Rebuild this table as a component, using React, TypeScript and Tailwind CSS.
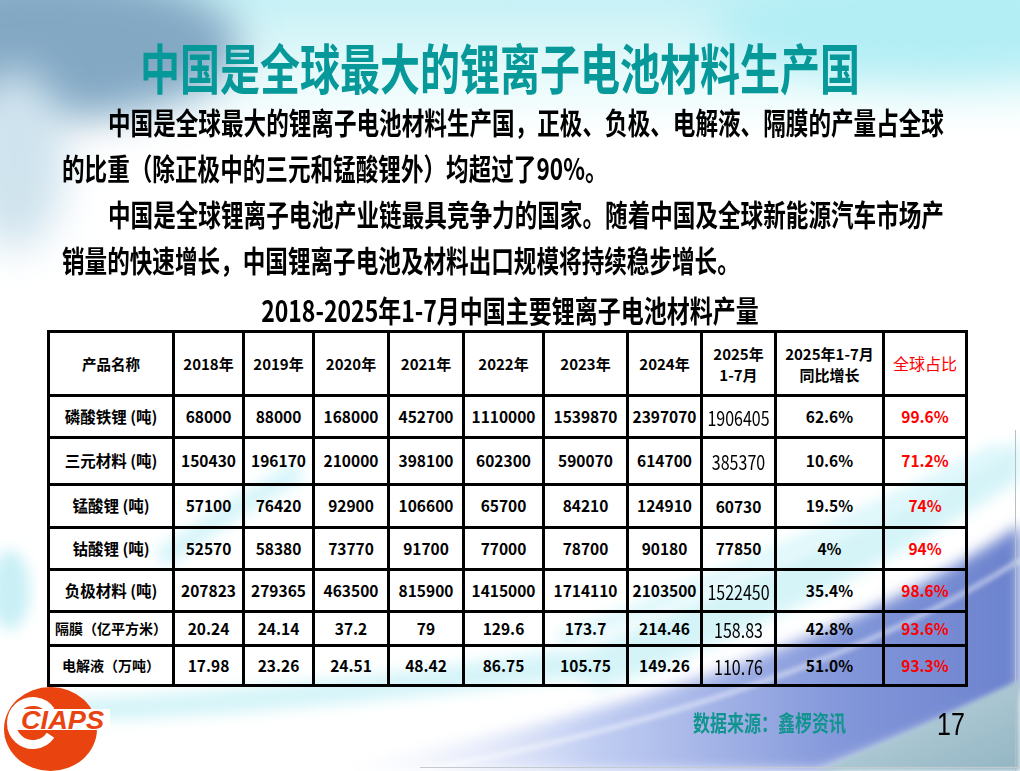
import React from "react";

const cjk = { fontFamily: '"Noto Sans CJK SC", "Noto Sans", sans-serif' };

type Row = {
  name: string;
  nameSize: string;
  vals: string[];
  ytd: string;
  ytdBold: boolean;
  yoy: string;
  share: string;
  h: string;
};

const rows: Row[] = [
  {
    name: "磷酸铁锂 (吨)",
    nameSize: "text-[15.5px]",
    vals: ["68000", "88000", "168000", "452700", "1110000", "1539870", "2397070"],
    ytd: "1906405",
    ytdBold: false,
    yoy: "62.6%",
    share: "99.6%",
    h: "h-[42px]",
  },
  {
    name: "三元材料 (吨)",
    nameSize: "text-[15.5px]",
    vals: ["150430", "196170", "210000", "398100", "602300", "590070", "614700"],
    ytd: "385370",
    ytdBold: false,
    yoy: "10.6%",
    share: "71.2%",
    h: "h-[47px]",
  },
  {
    name: "锰酸锂 (吨)",
    nameSize: "text-[15.5px]",
    vals: ["57100", "76420", "92900", "106600", "65700", "84210", "124910"],
    ytd: "60730",
    ytdBold: true,
    yoy: "19.5%",
    share: "74%",
    h: "h-[43px]",
  },
  {
    name: "钴酸锂 (吨)",
    nameSize: "text-[15.5px]",
    vals: ["52570", "58380", "73770", "91700", "77000", "78700", "90180"],
    ytd: "77850",
    ytdBold: true,
    yoy: "4%",
    share: "94%",
    h: "h-[42px]",
  },
  {
    name: "负极材料 (吨)",
    nameSize: "text-[15.5px]",
    vals: ["207823", "279365", "463500", "815900", "1415000", "1714110", "2103500"],
    ytd: "1522450",
    ytdBold: false,
    yoy: "35.4%",
    share: "98.6%",
    h: "h-[42px]",
  },
  {
    name: "隔膜（亿平方米）",
    nameSize: "text-[14px]",
    vals: ["20.24", "24.14", "37.2", "79", "129.6", "173.7", "214.46"],
    ytd: "158.83",
    ytdBold: false,
    yoy: "42.8%",
    share: "93.6%",
    h: "h-[34px]",
  },
  {
    name: "电解液（万吨）",
    nameSize: "text-[14px]",
    vals: ["17.98", "23.26", "24.51", "48.42", "86.75", "105.75", "149.26"],
    ytd: "110.76",
    ytdBold: false,
    yoy: "51.0%",
    share: "93.3%",
    h: "h-[40px]",
  },
];

const colWidths = [125, 70, 70, 75, 75, 80, 84, 74, 74, 108, 83];
const years = ["2018年", "2019年", "2020年", "2021年", "2022年", "2023年", "2024年"];

const cell = "border-[3px] border-black p-0 text-center align-middle";

function Background() {
  return (
    <svg className="absolute inset-0" width="1020" height="771" viewBox="0 0 1020 771">
      <defs>
        <linearGradient id="sky" x1="0" y1="0" x2="0" y2="1">
          <stop offset="0" stopColor="#c6f1f6" />
          <stop offset="0.55" stopColor="#e7fafb" />
          <stop offset="1" stopColor="#ffffff" />
        </linearGradient>
        <linearGradient id="band" gradientUnits="userSpaceOnUse" x1="300" y1="0" x2="1020" y2="0">
          <stop offset="0" stopColor="#ffffff" stopOpacity="0" />
          <stop offset="0.4" stopColor="#c3cff3" />
          <stop offset="0.75" stopColor="#8397da" />
          <stop offset="1" stopColor="#6b82cd" />
        </linearGradient>
        <linearGradient id="corner" x1="0" y1="0" x2="1" y2="1">
          <stop offset="0" stopColor="#c2d9e1" />
          <stop offset="1" stopColor="#93b5c3" />
        </linearGradient>
        <filter id="soft" x="-50%" y="-50%" width="200%" height="200%">
          <feGaussianBlur stdDeviation="20" />
        </filter>
        <filter id="mid" x="-20%" y="-20%" width="140%" height="140%">
          <feGaussianBlur stdDeviation="7" />
        </filter>
        <filter id="fine" x="-10%" y="-10%" width="120%" height="120%">
          <feGaussianBlur stdDeviation="2.5" />
        </filter>
      </defs>
      <rect width="1020" height="771" fill="#ffffff" />
      <rect width="1020" height="135" fill="url(#sky)" />
      <ellipse cx="40" cy="45" rx="200" ry="75" fill="#83a8c4" filter="url(#soft)" />
      <ellipse cx="15" cy="160" rx="50" ry="90" fill="#cfe3ee" filter="url(#soft)" />
      <ellipse cx="930" cy="25" rx="220" ry="55" fill="#b3eef5" filter="url(#soft)" />
      <ellipse cx="10" cy="590" rx="20" ry="40" fill="#c9f0f6" filter="url(#mid)" />
      <path
        d="M 40 700 Q 300 690 560 650 L 600 675 Q 300 715 60 722 Z"
        fill="#c8f1f6"
        opacity="0.75"
        filter="url(#mid)"
      />
      <path
        d="M 560 660 Q 800 560 1020 440 L 1020 480 Q 800 620 600 690 Z"
        fill="#c8f1f6"
        opacity="0.75"
        filter="url(#mid)"
      />
      <path
        d="M 160 560 Q 230 510 300 470"
        stroke="#d6f5f9"
        strokeWidth="20"
        fill="none"
        filter="url(#mid)"
      />
      <path
        d="M 560 640 Q 780 560 1000 450"
        stroke="#d9f6fa"
        strokeWidth="14"
        fill="none"
        filter="url(#mid)"
      />
      <path d="M 300 771 Q 760 700 1020 525 L 1020 690 Q 900 740 820 771 Z" fill="url(#band)" filter="url(#mid)" />
      <path d="M 815 771 Q 905 735 1020 680 L 1020 771 Z" fill="url(#corner)" filter="url(#fine)" />
      <path
        d="M 420 771 Q 800 700 1020 560"
        stroke="#ffffff"
        strokeWidth="4"
        fill="none"
        opacity="0.6"
        filter="url(#fine)"
      />
      <line x1="1015.5" y1="430" x2="1015.5" y2="771" stroke="#b5c0c6" />
      <line x1="420" y1="767.5" x2="1020" y2="767.5" stroke="#c2cacf" />
    </svg>
  );
}

function Logo() {
  return (
    <svg width="112" height="89" viewBox="0 0 112 89" className="-mt-[4px] shrink-0">
      <ellipse cx="50.5" cy="46" rx="46.5" ry="42" fill="#e9440f" />
      <path
        d="M 50.6 27.7 A 21.5 21.5 0 1 0 50.6 52.3"
        stroke="#ffffff"
        strokeWidth="9"
        fill="none"
      />
      <rect x="15" y="26" width="95" height="21" fill="#ffffff" />
      <text
        x="21"
        y="45.5"
        textLength="83"
        lengthAdjust="spacingAndGlyphs"
        fill="#e9440f"
        fontFamily='"Liberation Sans", Arial, sans-serif'
        fontWeight="900"
        fontStyle="italic"
        fontSize="25"
      >
        CIAPS
      </text>
    </svg>
  );
}

function Tall({ children, k = "scale-y-[1.33]" }: { children: React.ReactNode; k?: string }) {
  return <span className={`inline-block leading-none ${k}`}>{children}</span>;
}

export default function App() {
  return (
    <div className="relative w-[1020px] h-[771px] overflow-hidden bg-white" style={cjk}>
      <Background />
      <div className="relative flex flex-col">
        <div className="pt-[42px] pl-[140px]">
          <div className="h-[50px] leading-[50px] text-[40px] font-bold text-[#07999a] whitespace-nowrap">
            <Tall k="scale-y-[1.35]">中国是全球最大的锂离子电池材料生产国</Tall>
          </div>
        </div>

        <div className="mt-[7px] pl-[62px] text-[22.6px] font-bold text-black">
          <div className="h-[46px] leading-[46px] pl-[46px] whitespace-nowrap">
            <Tall>中国是全球最大的锂离子电池材料生产国，正极、负极、电解液、隔膜的产量占全球</Tall>
          </div>
          <div className="h-[46px] leading-[46px] whitespace-nowrap">
            <Tall>的比重（除正极中的三元和锰酸锂外）均超过了90%。</Tall>
          </div>
          <div className="h-[46px] leading-[46px] pl-[46px] whitespace-nowrap">
            <Tall>中国是全球锂离子电池产业链最具竞争力的国家。随着中国及全球新能源汽车市场产</Tall>
          </div>
          <div className="h-[46px] leading-[46px] whitespace-nowrap">
            <Tall>销量的快速增长，中国锂离子电池及材料出口规模将持续稳步增长。</Tall>
          </div>
        </div>

        <div className="mt-[16px] h-[31px] leading-[31px] flex justify-center text-[23px] font-bold text-black whitespace-nowrap">
          <Tall k="scale-y-[1.28]">2018-2025年1-7月中国主要锂离子电池材料产量</Tall>
        </div>

        <table className="ml-[47px] w-[921px] table-fixed border-collapse text-black">
          <colgroup>
            {colWidths.map((w, i) => (
              <col key={i} style={{ width: w }} />
            ))}
          </colgroup>
          <thead>
            <tr className="h-[64px] font-bold text-[15px] leading-[21px]">
              <td className={`${cell} text-[14.5px]`}>产品名称</td>
              {years.map((y) => (
                <td key={y} className={cell}>
                  {y}
                </td>
              ))}
              <td className={cell}>
                2025年
                <br />
                1-7月
              </td>
              <td className={cell}>
                2025年1-7月
                <br />
                同比增长
              </td>
              <td className={`${cell} font-normal text-[16px] text-[#ff0000]`}>全球占比</td>
            </tr>
          </thead>
          <tbody>
            {rows.map((r) => (
              <tr key={r.name} className={r.h}>
                <td className={`${cell} ${r.nameSize} font-bold whitespace-nowrap`}>{r.name}</td>
                {r.vals.map((v, i) => (
                  <td key={i} className={`${cell} text-[15.5px] font-bold`}>
                    {v}
                  </td>
                ))}
                <td className={cell}>
                  {r.ytdBold ? (
                    <span className="text-[15.5px] font-bold">{r.ytd}</span>
                  ) : (
                    <span className="inline-block text-[16px] font-normal scale-y-[1.25]">{r.ytd}</span>
                  )}
                </td>
                <td className={`${cell} text-[15.5px] font-bold`}>{r.yoy}</td>
                <td className={`${cell} text-[15.5px] font-bold text-[#ff0000]`}>{r.share}</td>
              </tr>
            ))}
          </tbody>
        </table>

        <div className="flex items-start h-[85px]">
          <Logo />
          <div className="ml-[581px] mt-[23px] h-[24px] leading-[24px] text-[17px] font-bold text-[#11948f] whitespace-nowrap">
            <Tall k="scale-y-[1.3]">数据来源：鑫椤资讯</Tall>
          </div>
          <div
            className="ml-[91px] mt-[22px] h-[30px] leading-[30px] text-[25px] text-black"
            style={{ fontFamily: '"Liberation Sans", Arial, sans-serif' }}
          >
            <Tall k="scale-y-[1.22]">17</Tall>
          </div>
        </div>
      </div>
    </div>
  );
}
